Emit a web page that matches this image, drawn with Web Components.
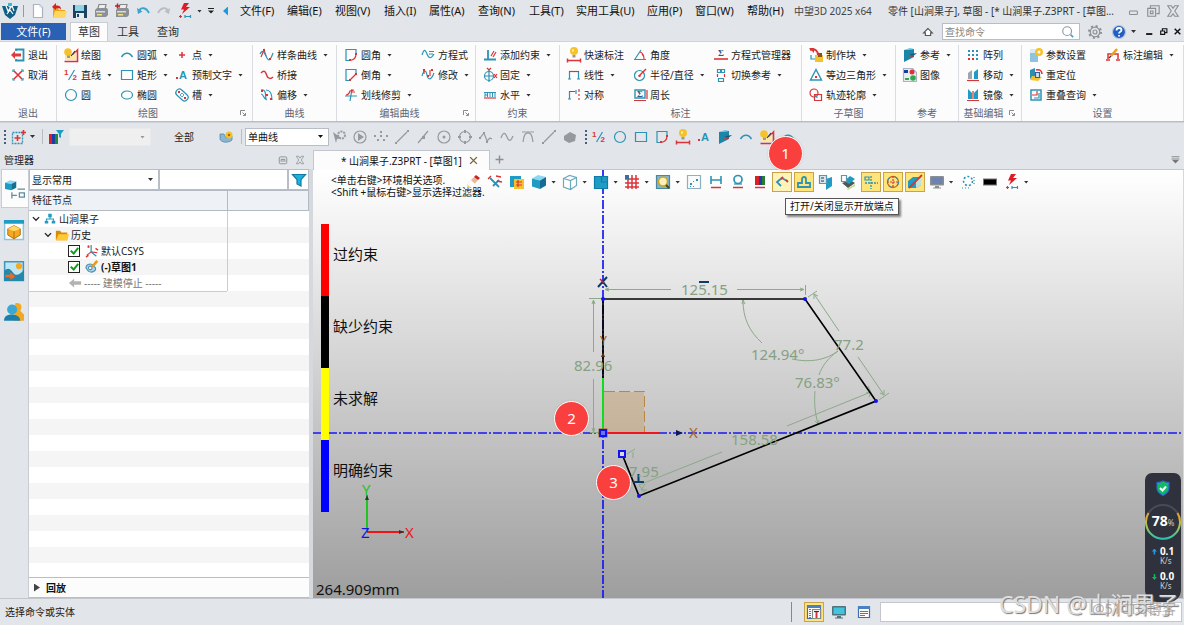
<!DOCTYPE html>
<html lang="zh-CN">
<head>
<meta charset="utf-8">
<title>中望3D 2025 x64</title>
<style>
  html, body { margin: 0; height: 100%; }
  body {
    font-family: "Noto Sans", "Noto Sans CJK SC", sans-serif;
    font-size: 11px; line-height: 16px; color: #222;
    background: #e2e5e9;
    --bar: #e2e5e9; --line: #b9bec6; --small: 10px; --text: 11px; --large: 15px;
  }
</style>
</head>
<body>
<cad-app></cad-app>

<script>
const define = (name, html, setup) => customElements.define(name, class extends HTMLElement {
  connectedCallback() {
    if (this.shadowRoot) return;
    const t = document.createElement('template');
    t.innerHTML = typeof html === 'function' ? html(this) : html;
    this.attachShadow({ mode: 'open' }).append(t.content.cloneNode(true));
    if (setup) setup(this);
  }
});

/* ---------- icons, drawn on a 16 x 16 grid ---------- */
const bulb = '<circle class="Y" cx="8" cy="5" r="4"/><path fill="#fff3a0" d="M6 3.500h2v2H6z"/><path class="G" d="M6.500 9h3v2.500h-3z"/>';
const drawIcon = '<path class="r" stroke-width="1.600" d="M1.500 14.500h13V3L7 11"/><path fill="#ffe9a0" d="M2 8h8l3-3v8H2z"/><circle class="Y" cx="5" cy="5" r="3.800"/><path class="G" d="M4 8.500h3V11H4z"/><path class="n" d="M8 9l4-5"/>';
const bolt = '<path fill="#e01b24" d="M7 0h5L9 4h4L5 11l2-4.500H4z"/><path class="r" d="M2 13.500h3M3.500 12v3"/><path class="b" d="M8 13.500h5M8 12v3M13.500 12v3"/>';
const cubeBlue = '<path fill="#8ad8f2" d="M1 4.500l6-3.500 8 2-6 3.500z"/><path class="B" d="M1 4.500l8 2V15l-8-2.500z"/><path fill="#156c95" d="M9 6.500L15 3v8.500L9 15z"/>';
const printer = '<path fill="#eee" stroke="#888" d="M5 5l1-3.500h7L12 6"/><path fill="#8b9096" d="M2 7l2-2h10l1 2v5l-2 2H2z"/><path fill="#d9dcdf" d="M3 8h9v1.500H3z"/><path fill="#f0e27a" d="M4 11h5v1.500H4z"/>';
const refIcon = '<path fill="#1b86a8" d="M2 3l10-1v8L2 15z"/><path fill="#67c6df" d="M2 3l6-2 4 1z"/><path fill="#145c86" d="M8 7l7-1-5 4z"/><path class="r" d="M7 9h5"/>';
const monitor = (a, b) => `<rect x="1" y="2" width="14" height="9.500" rx="1" fill="${b}"/><rect x="2.500" y="3.500" width="11" height="6.500" fill="${a}"/><path fill="${b}" d="M6 12h4v1.500h2v1H4v-1h2z"/>`;
const ICONS = {
  logo: '<path fill="#0f5f86" d="M0 3h6l2 2 2-2h6l-3 9-5 4-5-4z"/><path fill="none" stroke="#fff" stroke-width="1.200" d="M4 3l2 5 4-5 2 5M5 11l3-4 3 4"/><path fill="#38b6e0" d="M6 0h4v3H6z"/>',
  file: '<path fill="#fff" stroke="#aab4c0" d="M3.500 1.500h6l3 3v10h-9z"/><path fill="#d5deea" d="M9.500 1.500v3h3z"/>',
  open: '<path fill="#e9a416" d="M2 5h5l1 2h6v8H2z"/><path fill="#ffd75e" d="M4 8h12l-2 7H2z"/><path fill="#d92026" d="M1 4l4-4v2.500c4 0 5 1 5 4C9 5 7.500 5 5 5.500V7z"/>',
  save: '<path fill="#1c4460" d="M1 2h14v13H1z"/><path fill="#8fd3e8" d="M3 2h9v6H3z"/><path fill="#e6eef3" d="M4 10h8v5H4z"/><path fill="#1c4460" d="M5 11h2v3H5z"/>',
  print: printer,
  printadd: printer + '<path stroke="#c21e2a" stroke-width="1.500" d="M1 3h5M3.500.5v5"/>',
  undo: '<path fill="none" stroke="#3ba3cf" stroke-width="1.800" d="M4 8c2-4 7-4 10 2"/><path fill="#3ba3cf" d="M2 5l1 6 4.500-2.500z"/>',
  redo: '<path fill="none" stroke="#b9bdc2" stroke-width="1.800" d="M12 8c-2-4-7-4-10 2"/><path fill="#b9bdc2" d="M14 5l-1 6-4.500-2.500z"/>',
  bolt,
  exit: '<path class="b" stroke-width="1.800" d="M6 4V2.500h7.500v11H6V12"/><path fill="#e03a3e" d="M1 8l4-4v2.500h6v3H5V12z"/>',
  cancel: '<path class="r" stroke-width="1.600" d="M4 4l8 8M12 4l-8 8"/><path class="b" d="M3 5V3h2M11 3h2v2M13 11v2h-2M5 13H3v-2"/>',
  draw: drawIcon,
  line: '<path class="b" d="M5.500 13l6-10"/><text x="1" y="8" class="tr">1</text><text x="9.500" y="12.500" class="tr">2</text>',
  circle: '<circle class="b" cx="8" cy="8" r="5.500"/>',
  arc: '<path class="b" stroke-width="1.500" d="M2.500 10c3-5 8-5 11 0"/>',
  rect: '<path class="b" d="M2.500 3.500h11v9h-11z"/>',
  ellipse: '<ellipse class="b" cx="8" cy="8" rx="5.500" ry="4"/>',
  point: '<path class="r" stroke-width="1.500" d="M8 5v6M5 8h6"/>',
  pretext: '<text x="5" y="12" class="tb">A</text><path class="R" d="M2 10h2v2H2z"/>',
  slot: '<rect class="b" x="1" y="4.500" width="14" height="7" rx="3.500" transform="rotate(42 8 8)"/><path class="R" d="M4 4h2v2H4zM10 10h2v2h-2z"/><path class="b" stroke-width=".8" d="M6 8l2-2 2 2-2 2z"/>',
  spline: '<path class="r" d="M2 10L5 3l2 6"/><path class="b" d="M1 7c3-6 5 0 7 4s4 1 6-5"/><path class="R" d="M4 2h2v2H4zM10 11h2v2h-2z"/>',
  bridge: '<path class="r" stroke-width="1.500" d="M2 6c4-4 5 0 6 3s4 3 6 1"/>',
  offset: '<path class="b" d="M2 3c6-1 4 6 5 9M7 3c5 0 6 4 6 10M2 7c3 0 2 5 6 6"/><path class="R" d="M2 3h2v2H2zM7 7h2v2H7zM11 11h2v2h-2z"/>',
  fillet: '<path class="b" d="M13 8V2.500H3v11h5"/><path class="r" d="M13 7c0 4-2 6-6 6.500"/><path class="R" d="M12 6h2v2h-2zM6 12h2v2H6z"/>',
  chamfer: '<path class="b" d="M13 7V2.500H3v11h5"/><path class="r" d="M13 7l-6 6"/><path class="R" d="M12 6h2v2h-2zM6 12h2v2H6z"/>',
  trim: '<path class="b" d="M2 9h12M7 14l2-12"/><path class="r" d="M3 8c2 0 3-1 4-4l4-1M8 5h4"/>',
  equation: '<path class="b" d="M2 8c2-6 3-6 5-1s4 5 7 0M9 4.500h5M9 7h4"/>',
  modify: '<path class="b" d="M2 9c2-7 4-6 5-1s4 6 7-2"/><path class="r" d="M4 2v5M10 9V3"/><path class="R" d="M3 2h2v2H3zM11 2h2v2h-2zM7 8h2v2H7z"/>',
  addcon: '<path class="b" stroke-width="1.800" d="M2 12.500h12M6 3v9"/><path class="r" d="M9 9l3-5M11 10l3-5"/>',
  fix: '<circle class="b" cx="7" cy="9" r="4.500"/><path class="b" d="M7 3v12M2 9h10"/><path class="r" d="M5 1l2 2 2-2M12 7l3 4M15 7l-3 4"/>',
  horz: '<path class="b" stroke-width="1" d="M2 5.500h12M3 6v4M5.500 6v4M3 8h2.500M8 6v4M10.500 6v4M13 6v4"/><path class="r" d="M2 11h12"/>',
  quickdim: '<g transform="translate(0 -1)">' + bulb + '</g><path class="r" stroke-width="1.500" d="M1 13.500h14M1.500 11.500v4M14.500 11.500v4"/>',
  linear: '<path class="b" d="M3.500 4v8M12.500 4v8M2 12h3M11 12h3"/><path class="r" d="M3 4.500h10"/>',
  symm: '<path class="b" d="M3.500 4v8M2 12h3"/><path class="r" d="M3 4.500h6M13 2v3M13 7v2M13 11v2"/><path class="b" d="M10 3v4"/>',
  angle: '<path class="b" d="M2 12.500h12M3 12L9 3"/><path class="r" d="M8 5c3 1 4 4 4 7M10 7l2 3"/>',
  radius: '<circle class="b" cx="7.500" cy="8.500" r="5"/><path class="r" stroke-width="1.500" d="M7 9l7-7"/><path class="R" d="M6.500 8h2v2h-2z"/>',
  perim: '<path class="b" stroke-width="1.400" d="M3 3h10v8H3z"/><text x="5" y="10" class="ts">Σ</text><path class="r" d="M2 13.500h12M15 3v9"/>',
  eqman: '<text x="5" y="9" class="ts">Σ</text><path class="r" stroke-width="1.600" d="M1 12h14"/>',
  swapref: '<path class="b" d="M4.500 2.500h3v3h-3zM8.500 2.500h3v3h-3zM5.500 11.500h5v3h-5z"/><path class="r" d="M4.500 7v3M11.500 7v3"/>',
  block: '<path class="Y" d="M7 8h8v7H7z"/><path fill="#7a5b12" d="M10 6h4v4h-4z"/><path class="r" stroke-width="2" d="M2 3c5-2 8 1 8 5"/><path class="R" d="M1 1h5v5z"/><path class="b" d="M3 8v4h4"/>',
  triangle: '<path class="b" stroke-width="1.400" d="M8 2.500l5.500 10.500h-11z"/><path class="R" d="M7 9h2v2H7z"/>',
  profile: '<circle class="r" cx="6" cy="6" r="4"/><path class="r" d="M6.500 7.500h7v6h-7z"/><path class="b" d="M6 9c2-1 3 0 3 2"/>',
  ref: refIcon,
  image: '<path fill="#e8edf2" stroke="#a9b4c0" d="M1.500 1.500h9l4 4v9h-13z"/><path fill="#123d9c" d="M2 3h4v3H2z"/><circle class="R" cx="10" cy="5" r="2.500"/><path fill="#31a84d" d="M3 11h4v2H3z"/><circle fill="#31a84d" cx="11" cy="11" r="2.800"/>',
  pattern: '<path fill="#2b93b5" d="M3 3h2v2H3zM7 3h2v2H7zM11 3h2v2h-2zM3 7h2v2H3zM7 7h2v2H7zM11 7h2v2h-2zM11 11h2v2h-2z"/><path class="R" d="M3 11h2v2H3zM7 11h2v2H7z"/>',
  move: '<path fill="#9ea5ad" d="M3 6l4-3v9H3z"/><path class="B" d="M9 5l4-3v10H9z"/><path class="r" d="M2 13.500h12"/>',
  mirror: '<path class="B" d="M3 2l4 4v6H3zM13 2L9 6v6h4z"/><path class="r" d="M2 13.500h12M8 4v8"/>',
  params: '<path fill="#8fc3de" d="M2 4h8v11H2z"/><path fill="#d9e8f2" d="M2 2h5v4H2z"/><circle class="Y" cx="11" cy="5" r="4"/><circle fill="#fff" cx="11" cy="5" r="1.500"/>',
  reloc: '<path fill="#2d8db3" d="M2 3l5-2v8l-5 3z"/><path class="Y" d="M4 9l10 1-4 4-8-1z"/><path class="r" stroke-width="1.500" d="M8 3c4-1 6 1 6 4"/><path fill="#cfe0f2" stroke="#355c9d" d="M7.500 5.500h4v5h-4z"/>',
  overlap: '<path class="b" stroke-width="1.500" d="M13 3H3v10h10z"/><path class="r" d="M4 8h5V4"/><path class="b" d="M6 11h5V6"/>',
  dimedit: '<path class="r" stroke-width="1.500" d="M3 12V7h10v5M1 13h4M11 13h4"/><path stroke="#e8a11b" stroke-width="2.500" d="M6 9l6-7"/><path class="n" d="M4 11l2-2"/>',
  pick: '<path fill="none" stroke="#2b93b5" stroke-width="1.300" stroke-dasharray="2 1" d="M2.500 3.500h10v11h-10z"/><path class="r" stroke-width="1.600" d="M7.500 6v6M4.500 9h6M13.500 1v5M11 3.500h5"/>',
  colorfilter: '<path fill="#d92027" d="M1 5h3v10H1z"/><path fill="#1d3da8" d="M4 5h3v10H4z"/><path fill="#1f8b3a" d="M7 5h3v10H7z"/><path class="B" d="M8 1h8l-3 4v4l-2-1V5z"/>',
  sphere: '<path fill="#8fb4cf" stroke="#4a8bb4" stroke-width=".8" d="M2 5h4l2 4 6-2v4c-3 3-11 3-12-1z"/><circle class="Y" cx="11" cy="6" r="3.500"/><circle fill="#a86c0c" cx="11" cy="6" r="1.300"/>',
  gcursor: '<path class="G" d="M2 3l8 6-4 1-1 4z"/><circle class="g" cx="10.500" cy="6" r="3.500" stroke-dasharray="2 1" stroke-width="2"/>',
  gplay: '<circle class="g" cx="8" cy="8" r="6"/><path class="G" d="M6 4l6 4-6 4z"/>',
  gpoints: '<path class="G" d="M1 6h2v2H1zM4 10h2v2H4zM7 6h2v2H7zM10 10h2v2h-2zM13 6h2v2h-2zM7 2h2v2H7z"/>',
  gline: '<path class="g" d="M3 13L13 3"/><path class="G" d="M1 13h2v2H1zM13 1h2v2h-2z"/>',
  gmid: '<path class="g" d="M3 14L13 2"/><path class="G" d="M7 7h3v3H7z"/>',
  gcenter: '<circle class="g" cx="8" cy="8" r="6"/><circle class="G" cx="8" cy="8" r="1.500"/>',
  gquad: '<circle class="g" cx="8" cy="8" r="5.500"/><path class="G" d="M7 1h2v3H7zM7 12h2v3H7zM1 7h3v2H1zM12 7h3v2h-3z"/>',
  gzig: '<path class="g" d="M2 9l4-5 3 8 3-3 2 1"/><path class="G" d="M1 8h2v2H1zM5 3h2v2H5zM8 12h2v2H8z"/>',
  gwave: '<path class="g" d="M2 9c2-6 4-6 6-1s4 4 6-1"/>',
  gtan: '<path class="g" d="M2 3h12M3 13c1-7 2-9 5-9s4 2 5 9"/>',
  gplane: '<path class="G" d="M2 7l6-4 6 3-1 6-6 2-5-3z"/>',
  dimh: '<path class="b" stroke-width="1.600" d="M3 2v8M13 2v8M3 6h10"/><path class="r" stroke-width="1.500" d="M3 13.500h10"/>',
  dimo: '<circle class="b" stroke-width="1.700" cx="8" cy="5.500" r="4"/><path class="b" d="M4 10h8"/><path class="r" stroke-width="1.500" d="M3 13.500h10"/>',
  rgb: '<path fill="#d92027" d="M3 2h4v9H3z"/><path fill="#1d3da8" d="M7 2h3v9H7z"/><path fill="#2a7a34" d="M10 2h3v9h-3z"/><path class="r" stroke-width="1.500" d="M3 13.500h10"/>',
  openend: '<path class="b" stroke-width="1.800" d="M8 4L3 8l4 4M8 4l5 3"/><path class="r" stroke-width="1.800" d="M7 5l2-2M12 6l2 2"/>',
  region: '<path class="b" stroke-width="1.800" d="M2 13V9h4V5a2 2 0 0 1 4 0v4h4v4z"/>',
  eraser: '<path fill="#e9b89b" d="M3 9l6-6 4 3-6 7z"/><path fill="#fff" d="M3 9l3-3 4 4-3 4z"/><path fill="#c8231e" d="M9 3l2-2 4 3-2 2z"/><path fill="#f0cd4c" d="M2 10l4 4H3z"/>',
  conn: '<path class="b" stroke-width="1.800" d="M3 4l9 9M6 12l6-6"/><path class="r" stroke-width="1.300" d="M1 5l3-3M9 2l5 1M10 7l5 1"/>',
  layer: '<path class="B" d="M1 2h11v11H1z"/><path class="Y" d="M5 5h10v10H5z"/><path class="r" d="M7 8h6M7 11h6M9 6v7"/>',
  cube: cubeBlue,
  wire: '<path fill="#fff" stroke="#6fa9bd" d="M1.500 4.500l6-3 7 2v8l-6 4-7-2.500zM1.500 4.500l7 2 6-3M8.500 6.500v9"/>',
  plane: '<path class="B" d="M1 2h14v13H1z"/><path fill="none" stroke="#0c7ea6" d="M1.500 2.500h13v12h-13zM8.500 2v6H15"/>',
  grid: '<path fill="#fff" d="M1 1h14v14H1z"/><path class="r" stroke-width="1.500" d="M1 5h14M1 9h14M1 13h14M4 1v14M8 1v14M12 1v14"/><path fill="#3c6ea0" d="M1 1h4v4H1z"/>',
  zoom: '<path fill="#7fb6cf" stroke="#4a86a1" d="M1.500 1.500h13v13h-13z"/><circle fill="#fff1b8" stroke="#d6a21c" stroke-width="1.600" cx="8" cy="7.500" r="4.500"/><path stroke="#51480e" stroke-width="2" d="M11 11l3 3"/>',
  dotbox: '<path fill="#f9fbfc" stroke="#8fb1bf" d="M1.500 1.500h13v13h-13z"/><path fill="#2b93b5" d="M4 9h2v2H4zM4 12h1v1H4zM7 12h1v1H7zM10 5h2v2h-2zM7 7h1v1H7z"/>',
  sect: '<path class="B" d="M8 5l6-2v9l-6 4z"/><path fill="#d9e8ef" stroke="#5b95b0" d="M1.500 1.500h7v8h-7z"/><path class="n" stroke-width="1" d="M3 4h3M3 7h3"/>',
  sheet: '<path fill="#555" d="M2 9l8-3 5 3-7 5z"/><path class="B" d="M4 7l6-5 5 3-6 5z"/><path fill="#b9df8c" d="M2 12l5 3 8-5v2l-7 4z"/><path fill="#fff" stroke="#5b95b0" d="M1.500 1.500h5v6h-5z"/>',
  axes: '<path fill="none" stroke="#2b93b5" stroke-width="1.300" stroke-dasharray="2 1" d="M2 9h13M8 2v13"/><path class="b" d="M2 3h4v3H2z"/>',
  target: '<circle fill="none" stroke="#c56a1a" stroke-width="1.300" cx="8" cy="8" r="5.500"/><path class="r" stroke-dasharray="2 1" d="M8 2v12M2 8h12"/><circle class="b" cx="8" cy="8" r="5.500" stroke-dasharray="4 5"/>',
  knife: '<path class="B" d="M1 7l5-4h8v8l-5 3H1z"/><path fill="#bfe3d8" d="M9 7l5-4v8l-5 3z"/><path class="r" stroke-width="1.800" d="M2 14L15 1"/>',
  monitor: monitor('#6b83b0', '#8a8d92'),
  dots: '<circle fill="none" stroke="#2b93b5" stroke-width="1.600" stroke-dasharray="2 2" cx="8" cy="7" r="4.500"/><path fill="none" stroke="#2b93b5" stroke-dasharray="1 2" d="M2 14h7M14 3v8"/>',
  black: '<path fill="#777" d="M1 4.500h14v7H1z"/><path d="M2 5.500h12v5H2z"/>',
  screen: monitor('#41c4de', '#4f7280'),
  list: '<path fill="#fff" stroke="#3f6fb0" d="M2.500 2.500h11v11h-11z"/><path fill="#4a80c4" d="M2 2h12v3H2z"/><path stroke="#5077b0" stroke-width="1" d="M4 7.500h8M4 9.500h8M4 11.500h5"/>',
  tpanel: '<path fill="#fff" stroke="#3f6fb0" d="M1.500 1.500h13v13h-13z"/><path fill="#4a80c4" d="M1 1h14v3H1z"/><path stroke="#4a80c4" stroke-dasharray="1 1" stroke-width="2" d="M4 5v9"/><path fill="#fff" stroke="#888" d="M6.500 5.500h8v9h-8z"/><path class="r" stroke-width="2" d="M10.500 8v6"/><path class="n" d="M8 7.500h5"/>',
  tree: '<path class="B" d="M6 2h4v4H6zM2 10h4v3H2zM10 10h4v3h-4z"/><path class="b" d="M8 5v3M4 10V8h8v2"/>',
  folder: '<path fill="#d98a0c" d="M1 3h5l1 2h7v9H1z"/><path fill="#ffc933" d="M4 7h12l-2 7H1z"/>',
  csys: '<path class="r" stroke-width="1.400" d="M7 9l7 1M7 9l-5 4M3 2l2 2M5 2L3 4M12 5l3 2M1 15l3-2"/><path class="b" stroke-width="1.400" d="M7 1v8l6 5"/>',
  sketch: '<path fill="#a9d3ea" stroke="#4b8fb2" d="M1 9c0-4 4-5 7-4l4 4c1 4-4 6-8 4z"/><circle fill="#fff" stroke="#4b8fb2" cx="6" cy="9" r="2"/><path stroke="#ea9a17" stroke-width="3" d="M8 8l6-7"/>',
  back: '<path fill="#b3b3b3" d="M1 8l6-5v3h8v4H7v3z"/>',
  funnel: '<path fill="#1fb0dc" stroke="#0c7ea6" d="M1.500 2.500h13L10 7.500V14l-4-2V7.500z"/>',
  chevron: '<path fill="none" stroke="#222" stroke-width="2" d="M3 5l5 5 5-5"/>',
  gear: '<circle fill="none" stroke="#8c9096" stroke-width="1.200" cx="8" cy="8" r="4.800"/><circle fill="none" stroke="#8c9096" stroke-width="2" stroke-dasharray="2 2.700" cx="8" cy="8" r="6"/><circle fill="#e2e5e9" stroke="#8c9096" cx="8" cy="8" r="2"/>',
  help: '<circle fill="#1f5fc4" stroke="#b9c7dd" cx="8" cy="8" r="6.500"/><path fill="none" stroke="#fff" stroke-width="1.800" d="M5.500 6.500c0-3.500 5-3 5-.5 0 2-2.500 1.500-2.500 3.500M8 11v1.500"/>',
  search: '<circle fill="none" stroke="#8d98a3" stroke-width="1.300" cx="7" cy="7" r="5"/><path stroke="#4aa3c4" stroke-width="2" d="M11 11l3 3"/>',
  min: '<path d="M2 11h11v3H2z"/>',
  restore: '<path fill="none" stroke="#111" stroke-width="2" d="M6 6V3h8v7h-3M3 7h7v6H3z"/>',
  close: '<path stroke="#111" stroke-width="2.500" d="M3 3l10 10M13 3L3 13"/>',
  wmin: '<rect fill="none" stroke="#8a8d92" x="4" y="8" width="9" height="4" rx="1"/>',
  wrestore: '<path fill="none" stroke="#8a8d92" stroke-width="1.300" d="M5 5V2h10v9h-3M2 5h9v9H2zM5 8h3v3H5z"/>',
  wclose: '<path fill="none" stroke="#8a8d92" stroke-width="1.200" d="M2 2h4l2 3 2-3h4l-4 6 4 6h-4l-2-3-2 3H2l4-6z"/>',
  pin: '<rect fill="none" stroke="#7f848a" stroke-width="1.300" x="2" y="3" width="12" height="11" rx="2"/><path fill="none" stroke="#7f848a" stroke-width="1.300" d="M5 11V7h6v4M8 7v4"/>',
  home: '<path fill="#fff" stroke="#555" stroke-width="1.300" d="M8 4L3 9h2v3h6V9h2z"/>',
  plus: '<path stroke="#8a8d92" stroke-width="2.500" d="M8 1v14M1 8h14"/>',
  x: '<path stroke="#7c6432" stroke-width="2.500" d="M2 2l12 12M14 2L2 14"/>',
  launch: '<path fill="none" stroke="#666" stroke-width="1.500" d="M3 12V3h9M7 7l5 5M13 8v5H8"/>',
  more: '<path fill="none" stroke="#888" stroke-width="1.800" d="M1 3h14M1 7h14"/><path fill="#777" d="M2 9h12l-6 6z"/>',
  down: '<path stroke="#222" stroke-width="2" d="M2 3h12"/><path fill="#222" d="M2 7h12l-6 6z"/>',
  manager: '<path fill="#8ad8f2" d="M0 3l4-2 5 1-4 2z"/><path class="B" d="M0 3l5 1v5L0 8z"/><path fill="#156c95" d="M5 4l4-2v5L5 9z"/><path fill="none" stroke="#5e8ba0" stroke-width="1" d="M5.500 10.500v5M5.500 13h4M11.500 11h4v3.500h-4zM10 8h6"/>',
  part: '<path fill="#fff" stroke="#8ec6de" d="M.5.5h15v15H.5z"/><path class="B" d="M0 0h16v3H0z"/><path fill="#f6a821" stroke="#a86708" stroke-width=".7" d="M3 7l5-2.500L13 7v5l-5 3-5-3z"/><path fill="#ffd86b" d="M3 7l5-2.500L13 7 8 9z"/><path stroke="#a86708" stroke-width=".7" d="M8 9v6"/>',
  scene: '<path fill="#bfe6f4" stroke="#3d97bb" d="M.5.5h15v15H.5z"/><path fill="#2487ac" d="M0 16V8c3-3 5-2 7 1s5 3 9-2v9z"/><circle fill="#f7a81c" cx="12" cy="4" r="2.500"/><path fill="#ee6b22" d="M1 11h4V9l4 3.500L5 15v-2H1z"/>',
  users: '<path fill="#f3a81e" d="M9 1c5-1 6 3 4 6l3 3v5H8z"/><circle fill="#3aa8d4" cx="6.500" cy="6" r="4"/><path fill="#1b7fab" d="M0 15c0-4 3-5 6.500-5S13 12 13 15z"/>',
  shield: '<path fill="#12b866" stroke="#2f63d6" d="M8 1c2 1 4 1.500 6 1.500V8c0 4-3 6-6 7.500C5 14 2 12 2 8V2.500C4 2.500 6 2 8 1z"/><path fill="none" stroke="#fff" stroke-width="2" d="M5 8l2.500 2.500L11 6.500"/>',
};
define('ui-icon', el => `
<style>
  :host { display: block; flex: none; width: var(--size, 16px); height: var(--size, 16px); }
  svg { display: block; width: 100%; height: 100%; overflow: visible; }
  .b { fill: none; stroke: #2b93b5; } .r { fill: none; stroke: #dc3338; }
  .g { fill: none; stroke: #96999d; } .n { fill: none; stroke: #333; }
  .B { fill: #1f9cc4; } .R { fill: #dc3338; } .G { fill: #96999d; } .Y { fill: #f6c22b; }
  .tr { font: bold 8px "Liberation Sans", sans-serif; fill: #dc3338; }
  .tb { font: bold 11px "Liberation Sans", sans-serif; fill: #2b93b5; }
  .ts { font: bold 9px "Liberation Serif", serif; fill: #2a5a88; }
</style>
<svg viewBox="0 0 16 16" stroke-width="1.2" aria-hidden="true">${ICONS[el.getAttribute('name')] || ''}</svg>`);

define('drop-arrow', `
<style>
  :host { display: block; flex: none; width: 5px; height: 3px; background: var(--arrow, #333);
          clip-path: polygon(0 0, 100% 0, 50% 100%); }
</style>`);

/* ---------- small shared controls ---------- */
define('tool-button', el => `
<style>
  :host { display: block; flex: none; }
  button { display: flex; align-items: center; justify-content: center; gap: 4px; box-sizing: border-box;
           width: var(--w, 16px); height: 20px; padding: 0; border: 0; background: none; font: inherit; color: inherit; }
  :host([drop]) button { width: auto; }
  :host([active]) button { background: #ffe47a; border: 1px solid #c9a24a; }
  :host([hover]) button { background: #fff3b8; }
</style>
<button type="button" aria-label="${el.getAttribute('label') || el.getAttribute('icon')}"><ui-icon name="${el.getAttribute('icon')}"></ui-icon>${el.hasAttribute('drop') ? '<drop-arrow></drop-arrow>' : ''}</button>`);

define('ribbon-button', el => `
<style>
  :host { display: flex; }
  button { display: flex; align-items: center; height: 20px; padding: 0; border: 0; background: none;
           font: inherit; line-height: 16px; color: #222; white-space: nowrap; }
  ui-icon { margin-right: 2px; }
  drop-arrow { margin-left: 6px; }
</style>
<button type="button"><ui-icon name="${el.getAttribute('icon')}"></ui-icon><slot></slot>${el.hasAttribute('drop') ? '<drop-arrow></drop-arrow>' : ''}</button>`);

define('ribbon-group', el => `
<style>
  :host { display: flex; flex-direction: column; flex: none; box-sizing: border-box; width: var(--w); padding-top: 3px; }
  .items { display: grid; grid-template-rows: repeat(3, 20px); grid-auto-flow: column; justify-content: start;
           grid-template-columns: var(--cols, auto); padding-left: var(--pad, 6px); height: 60px;
           border-right: 1px solid #d9dce1; }
  footer { display: grid; grid-template-columns: 1fr auto; align-items: center; height: 17px; text-align: center;
           color: #5c6675; border-right: 1px solid #d9dce1; }
  span { white-space: nowrap; }
  ui-icon { --size: 8px; margin-right: 5px; }
</style>
<div class="items"><slot></slot></div>
<footer><span>${el.getAttribute('label')}</span>${el.hasAttribute('launch') ? '<ui-icon name="launch"></ui-icon>' : ''}</footer>`);

define('combo-box', el => `
<style>
  :host { display: grid; align-items: center; min-width: 0; }
  select, drop-arrow { grid-area: 1 / 1; }
  select { appearance: none; box-sizing: border-box; width: 100%; height: 100%; margin: 0; padding: 0 2px; border-radius: 0;
           border: 1px solid #b9bec6; background: #fff; font: inherit; color: #111; opacity: 1; }
  select:disabled { background: #efefef; border-color: #e9eaec; }
  drop-arrow { justify-self: end; margin-right: 6px; pointer-events: none; }
</style>
<select aria-label="${el.getAttribute('label')}" ${el.hasAttribute('disabled') ? 'disabled' : ''}><option>${el.getAttribute('value') || ''}</option></select>
<drop-arrow></drop-arrow>`);

/* ---------- title bar ---------- */
define('title-bar', `
<style>
  :host { display: flex; align-items: center; height: 22px; white-space: nowrap; }
  .quick { display: flex; align-items: center; gap: 5px; box-sizing: border-box; width: 240px; padding-left: 2px; flex: none; }
  .sep { width: 1px; height: 12px; margin-right: 1px; background: #999; }
  .quick > ui-icon[name=down] { --size: 8px; }
  .left { width: 5px; height: 9px; margin-left: 3px; background: #1d9ad8; clip-path: polygon(100% 0, 100% 100%, 0 50%); }
  nav { display: grid; grid-template-columns: 47px 48px 49px 45px 49px 51px 47px 71px 48px 52px 47px; flex: none; }
  a { color: #111; text-decoration: none; }
  .product { width: 94px; flex: none; color: #444; font-size: var(--small); }
  .doc { flex: 1; min-width: 0; overflow: hidden; font-size: var(--small); color: #333; }
  .win { display: flex; gap: 6px; padding-right: 4px; --size: 14px; --w: 14px; }
</style>
<div class="quick">
  <ui-icon name="logo"></ui-icon><span class="sep"></span>
  <tool-button icon="file" label="新建"></tool-button><tool-button icon="open" label="打开"></tool-button>
  <tool-button icon="save" label="保存"></tool-button><tool-button icon="print" label="打印"></tool-button>
  <tool-button icon="printadd" label="打印设置"></tool-button><tool-button icon="undo" label="撤销"></tool-button>
  <tool-button icon="redo" label="重做"></tool-button><tool-button icon="bolt" label="重生成" drop></tool-button>
  <ui-icon name="down"></ui-icon><span class="left"></span>
</div>
<nav>
  <a href="#">文件(F)</a><a href="#">编辑(E)</a><a href="#">视图(V)</a><a href="#">插入(I)</a><a href="#">属性(A)</a>
  <a href="#">查询(N)</a><a href="#">工具(T)</a><a href="#">实用工具(U)</a><a href="#">应用(P)</a><a href="#">窗口(W)</a><a href="#">帮助(H)</a>
</nav>
<span class="product">中望3D 2025 x64</span>
<span class="doc">零件 [山涧果子], 草图 - [* 山涧果子.Z3PRT - [草图...</span>
<div class="win"><tool-button icon="wmin" label="最小化"></tool-button><tool-button icon="wrestore" label="还原"></tool-button><tool-button icon="wclose" label="关闭"></tool-button></div>`);

/* ---------- ribbon tabs ---------- */
define('ribbon-tabs', `
<style>
  :host { display: flex; align-items: stretch; height: 19px; padding: 0 2px 0 1px; color: #333; }
  button { font: inherit; border: 0; padding: 0; background: none; color: inherit; }
  .file { width: 65px; margin: 1px 4px 1px 0; background: #2a61b5; color: #fff; }
  .on { width: 38px; background: #fcfcfc; border: 1px solid #c9cdd3; border-bottom: 0; box-sizing: border-box; }
  .tab { width: 40px; }
  .end { display: flex; align-items: center; margin-left: auto; }
  .end tool-button { --w: 16px; }
  label { display: flex; align-items: center; box-sizing: border-box; width: 138px; height: 17px; margin: 0 7px;
          border: 1px solid #b9bec6; background: #fff; padding-right: 4px; --size: 14px; }
  input { flex: 1; min-width: 0; border: 0; padding: 0 2px; font: inherit; font-size: var(--small); background: none; outline: 0; }
  input::placeholder { color: #888; }
  .gap { width: 8px; }
  .mdi { display: flex; gap: 5px; margin-left: 9px; --size: 9px; }
  drop-arrow { margin-left: 4px; }
</style>
<button class="file" type="button">文件(F)</button>
<button class="on" type="button">草图</button>
<button class="tab" type="button">工具</button>
<button class="tab" type="button">查询</button>
<div class="end">
  <ui-icon name="home" style="--size:14px"></ui-icon>
  <label><input type="search" placeholder="查找命令" aria-label="查找命令"><ui-icon name="search"></ui-icon></label>
  <tool-button icon="gear" label="设置"></tool-button><span class="gap"></span><tool-button icon="help" label="帮助"></tool-button><drop-arrow></drop-arrow>
  <div class="mdi"><ui-icon name="min"></ui-icon><ui-icon name="restore"></ui-icon><ui-icon name="close"></ui-icon></div>
</div>`);

/* ---------- ribbon ---------- */
define('ribbon-bar', `
<style>
  :host { display: flex; box-sizing: border-box; height: 81px; background: #fcfcfc; border-top: 1px solid #cfd3d9;
          border-bottom: 1px solid #b9bec6; font-size: var(--small); overflow: hidden; }
  .last { flex: 1 0 auto; }
</style>
<ribbon-group label="退出" style="--w:57px;--pad:10px">
  <ribbon-button icon="exit">退出</ribbon-button><ribbon-button icon="cancel">取消</ribbon-button>
</ribbon-group>
<ribbon-group label="绘图" launch style="--w:196px;--cols:56px 55px auto">
  <ribbon-button icon="draw">绘图</ribbon-button><ribbon-button icon="line" drop>直线</ribbon-button><ribbon-button icon="circle">圆</ribbon-button>
  <ribbon-button icon="arc" drop>圆弧</ribbon-button><ribbon-button icon="rect" drop>矩形</ribbon-button><ribbon-button icon="ellipse">椭圆</ribbon-button>
  <ribbon-button icon="point" drop>点</ribbon-button><ribbon-button icon="pretext" drop>预制文字</ribbon-button><ribbon-button icon="slot" drop>槽</ribbon-button>
</ribbon-group>
<ribbon-group label="曲线" style="--w:84px">
  <ribbon-button icon="spline" drop>样条曲线</ribbon-button><ribbon-button icon="bridge">桥接</ribbon-button><ribbon-button icon="offset" drop>偏移</ribbon-button>
</ribbon-group>
<ribbon-group label="编辑曲线" launch style="--w:139px;--cols:77px auto">
  <ribbon-button icon="fillet" drop>圆角</ribbon-button><ribbon-button icon="chamfer" drop>倒角</ribbon-button><ribbon-button icon="trim" drop>划线修剪</ribbon-button>
  <ribbon-button icon="equation">方程式</ribbon-button><ribbon-button icon="modify" drop>修改</ribbon-button>
</ribbon-group>
<ribbon-group label="约束" style="--w:84px">
  <ribbon-button icon="addcon" drop>添加约束</ribbon-button><ribbon-button icon="fix" drop>固定</ribbon-button><ribbon-button icon="horz" drop>水平</ribbon-button>
</ribbon-group>
<ribbon-group label="标注" style="--w:242px;--cols:66px 81px auto">
  <ribbon-button icon="quickdim">快速标注</ribbon-button><ribbon-button icon="linear" drop>线性</ribbon-button><ribbon-button icon="symm">对称</ribbon-button>
  <ribbon-button icon="angle">角度</ribbon-button><ribbon-button icon="radius" drop>半径/直径</ribbon-button><ribbon-button icon="perim">周长</ribbon-button>
  <ribbon-button icon="eqman">方程式管理器</ribbon-button><ribbon-button icon="swapref" drop>切换参考</ribbon-button>
</ribbon-group>
<ribbon-group label="子草图" style="--w:94px">
  <ribbon-button icon="block" drop>制作块</ribbon-button><ribbon-button icon="triangle" drop>等边三角形</ribbon-button><ribbon-button icon="profile" drop>轨迹轮廓</ribbon-button>
</ribbon-group>
<ribbon-group label="参考" style="--w:63px">
  <ribbon-button icon="ref" drop>参考</ribbon-button><ribbon-button icon="image">图像</ribbon-button>
</ribbon-group>
<ribbon-group label="基础编辑" launch style="--w:63px">
  <ribbon-button icon="pattern">阵列</ribbon-button><ribbon-button icon="move" drop>移动</ribbon-button><ribbon-button icon="mirror" drop>镜像</ribbon-button>
</ribbon-group>
<ribbon-group class="last" label="设置" style="--w:160px;--cols:77px auto">
  <ribbon-button icon="params">参数设置</ribbon-button><ribbon-button icon="reloc">重定位</ribbon-button><ribbon-button icon="overlap" drop>重叠查询</ribbon-button>
  <ribbon-button icon="dimedit" drop>标注编辑</ribbon-button>
</ribbon-group>`);

/* ---------- filter strip ---------- */
const buttons = names => names.map(n => `<tool-button icon="${n}"></tool-button>`).join('');
define('filter-strip', `
<style>
  :host { display: flex; align-items: center; box-sizing: border-box; height: 28px; padding: 0 4px; border-top: 1px solid #cfd3d9; font-size: var(--small); }
  .grip { width: 2px; height: 14px; flex: none; background: repeating-linear-gradient(#4a5a7a 0 2px, transparent 2px 4px); }
  .sep { width: 1px; height: 15px; flex: none; background: #b9bec6; }
  .off { width: 82px; height: 17px; --arrow: #999; }
  .kind { width: 84px; height: 18px; --arrow: #111; margin-left: 3px; }
  .row { display: flex; gap: 5px; }
  .all { margin: 0 24px 0 23px; white-space: nowrap; }
</style>
<span class="grip"></span>
<tool-button icon="pick" drop style="margin:0 7px 0 4px"></tool-button>
<span class="sep"></span>
<tool-button icon="colorfilter" style="margin:0 5px 0 5px"></tool-button>
<combo-box class="off" label="过滤器" disabled></combo-box>
<span class="all">全部</span>
<tool-button icon="sphere"></tool-button>
<span class="sep" style="margin-left:7px"></span>
<combo-box class="kind" label="曲线类型" value="单曲线"></combo-box>
<div class="row" style="margin:0 7px 0 2px">${buttons(['gcursor','gplay','gpoints','gline','gmid','gcenter','gquad','gzig','gwave','gtan','gline','gplane'])}</div>
<span class="grip"></span>
<div class="row" style="margin-left:4px">${buttons(['line','circle','rect','fillet','quickdim','pretext','ref','arc','draw','arc'])}</div>`);

/* ---------- manager panel ---------- */
define('tree-row', el => `
<style>
  :host { display: grid; grid-template-columns: 199px 1fr; height: 16px; }
  :host(:nth-child(even)) { background: #f5f5f5; }
  div { display: flex; align-items: center; gap: 2px; box-sizing: border-box; padding-left: var(--indent); border-right: 1px solid #c9cdd3; white-space: nowrap; --size: 14px; }
  input { appearance: none; flex: none; box-sizing: border-box; width: 12px; height: 12px; margin: 0 3px 0 0; border: 1px solid #222; background: #fff; }
  input:checked::before { content: ""; display: block; width: 3px; height: 6px; margin: 0 0 0 3px; border: solid #10a01c; border-width: 0 2px 2px 0; transform: rotate(40deg); }
</style>
<div>${el.hasAttribute('open') ? '<ui-icon name="chevron" style="--size:10px"></ui-icon>' : ''}
${el.hasAttribute('check') ? '<input type="checkbox" checked aria-label="显示">' : ''}
<ui-icon name="${el.getAttribute('icon')}"></ui-icon><slot></slot></div>`);

define('manager-panel', `
<style>
  :host { display: grid; grid-template: 19px 1fr / 29px 280px; padding-right: 4px; font-size: var(--small); background: #d5d9de; }
  header { grid-column: 1 / -1; display: flex; align-items: center; padding: 0 8px 0 4px; margin-right: -4px; background: var(--bar); --size: 10px; }
  header ui-icon { margin-left: 7px; }
  header span { flex: 1; }
  aside { display: flex; flex-direction: column; align-items: center; background: var(--bar); --size: 20px; border-right: 1px solid #c9cdd3; }
  aside ui-icon { margin-bottom: 21px; }
  aside .cur { display: grid; place-items: center; width: 27px; height: 39px; margin-bottom: 12px; background: #fcfcfc; border: 1px solid #c9cdd3; box-sizing: border-box; border-right: 0; }
  .cur ui-icon { margin: 0; }
  main { display: grid; grid-template-rows: 21px 21px 1fr 21px; background: #fff; min-height: 0; }
  .find { display: grid; grid-template-columns: 130px 1fr 21px; }
  .find input { min-width: 0; border: 1px solid #b9bec6; border-radius: 0; }
  .find button { display: grid; place-items: center; padding: 0; border: 1px solid #b9bec6; background: #fff; }
  .head { display: grid; grid-template-columns: 199px 1fr; background: #eef1f6; border: solid #b4bac3; border-width: 1px 0; box-sizing: border-box; }
  .head span { padding-left: 3px; border-right: 1px solid #b4bac3; line-height: 19px; box-sizing: border-box; }
  .tree { background: repeating-linear-gradient(#fff 0 16px, #f5f5f5 16px 32px); }
  .list { display: grid; background: #fff; }
  .end { width: 198px; height: 0; border-top: 1px solid #c9cdd3; }
  .replay { display: flex; align-items: center; gap: 6px; padding-left: 5px; border: solid #b9bec6; border-width: 1px 0; font: inherit; font-weight: bold; background: #fcfcfc; color: #111; text-align: left; }
  .replay i { width: 6px; height: 8px; background: #444; clip-path: polygon(0 0, 100% 50%, 0 100%); }
  b { color: #111; }
  .stop { color: #777; }
</style>
<header><span>管理器</span><ui-icon name="pin"></ui-icon><ui-icon name="wclose"></ui-icon></header>
<aside><div class="cur"><ui-icon name="manager"></ui-icon></div><ui-icon name="part"></ui-icon><ui-icon name="scene"></ui-icon><ui-icon name="users"></ui-icon></aside>
<main>
  <div class="find"><combo-box label="显示" value="显示常用"></combo-box><input type="text" aria-label="过滤"><button type="button" aria-label="筛选"><ui-icon name="funnel"></ui-icon></button></div>
  <div class="head"><span>特征节点</span><span></span></div>
  <div class="tree"><div class="list">
    <tree-row icon="tree" open style="--indent:2px">山涧果子</tree-row>
    <tree-row icon="folder" open style="--indent:14px">历史</tree-row>
    <tree-row icon="csys" check style="--indent:39px">默认CSYS</tree-row>
    <tree-row icon="sketch" check style="--indent:39px"><b>(-)草图1</b></tree-row>
    <tree-row icon="back" style="--indent:39px"><span class="stop">----- 建模停止 -----</span></tree-row>
  </div><div class="end"></div></div>
  <button class="replay" type="button"><i></i>回放</button>
</main>`);

/* ---------- sketch viewport ---------- */
define('view-toolbar', `
<style>
  :host { display: flex; align-items: flex-start; padding: 2px 0 0 18px; }
  p { margin: 2px 0 0; width: 132px; line-height: 12px; font-size: var(--small); white-space: nowrap; color: #111; }
  div { display: flex; justify-content: space-between; width: 568px; --w: 20px; }
  tool-button[drop] { padding: 0 2px; }
</style>
<p>&lt;单击右键&gt;环境相关选项.<br>&lt;Shift +鼠标右键&gt;显示选择过滤器.</p>
<div>
  <tool-button icon="eraser"></tool-button><tool-button icon="conn"></tool-button><tool-button icon="layer"></tool-button>
  <tool-button icon="cube" drop></tool-button><tool-button icon="wire" drop></tool-button><tool-button icon="plane" drop></tool-button>
  <tool-button icon="grid" drop></tool-button><tool-button icon="zoom" drop></tool-button>
  <tool-button icon="dotbox"></tool-button><tool-button icon="dimh"></tool-button><tool-button icon="dimo"></tool-button><tool-button icon="rgb"></tool-button>
  <tool-button icon="openend" active hover></tool-button><tool-button icon="region" active></tool-button>
  <tool-button icon="sect"></tool-button><tool-button icon="sheet"></tool-button>
  <tool-button icon="axes" active></tool-button><tool-button icon="target" active></tool-button><tool-button icon="knife" active></tool-button>
  <tool-button icon="monitor" drop></tool-button><tool-button icon="dots"></tool-button><tool-button icon="black"></tool-button><tool-button icon="bolt" drop></tool-button>
</div>`);

define('sketch-drawing', `
<style>
  :host { display: block; position: absolute; inset: 0; overflow: hidden; }
  svg { display: block; width: 100%; height: 100%; }
  .axis { stroke: #1818f5; stroke-width: 1.700; stroke-dasharray: 9 2 2 2; fill: none; }
  .geo { stroke: #000; stroke-width: 1.700; fill: none; }
  .dim { stroke: #8ca98a; fill: none; }
  text { font-size: 15px; }
  .small { font-size: 12px; }
  .val { fill: #85a181; }
  .mark { stroke: #0a3c66; stroke-width: 2; fill: none; }
  .pt { fill: #1212f0; }
</style>
<svg><g transform="translate(-313 -170)">
  <path class="axis" d="M603 170V598M313 433H1182"/>
  <rect x="604" y="392" width="40" height="40" fill="#c9a06a" fill-opacity=".45"/>
  <path d="M604 391.500h40.500V432" fill="none" stroke="#b88746" stroke-dasharray="11 4"/>
  <path class="dim" d="M605 289.500h66M737 289.500h67M805.500 285v10M609 288l-4 1.500 4 1.500M800 288l4 1.500-4 1.500M593.500 300v52M593.500 379v53M589 298.500h12M590 432.500h12M592 304l1.500-4 1.500 4M592 428l1.500 4 1.500-4"/>
  <path class="dim" d="M814 294l25 37M858 357l26 38M808 297l9-6M879 400l10-7M814 299v-5l4 2M884 390v5l-4-2M871 392l-84 34M722 452l-83 33M868 386l6 13M866 393l5-1-2 5M627 454l8-5M633 452v6M646 494l-7-9M645 484l-4 6h6"/>
  <path class="dim" d="M743 300c0 18 6 31 19 43M742 304l1-4 2 4M792 359c18 4 34 1 46-8M819 375c3-9 9-17 19-24M815 391c-1 12 0 22 3 33M815 421l3 3 1-4"/>
  <path class="geo" d="M603 378V299H805L876 401 639 496 622 454"/>
  <path d="M603 378v55" stroke="#10dd20" stroke-width="2"/>
  <path d="M604 433h55" stroke="#ee1420" stroke-width="2"/>
  <path d="M676 430l7 3-7 3z" fill="#0a1a60"/>
  <text x="689" y="438" fill="#a8681c">X</text><text class="small" x="600" y="345" fill="#9a5a14">Y</text>
  <path d="M603 352l-2 5h4z" fill="#5a2c14"/>
  <rect x="599" y="429" width="8" height="8" fill="none" stroke="#a8681c"/>
  <rect x="600" y="430" width="6" height="6" fill="#6e76ef" stroke="#1212f0" stroke-width="2"/>
  <rect x="619" y="451" width="6" height="6" fill="#d8d8d8" stroke="#1212f0" stroke-width="2"/>
  <circle class="pt" cx="603" cy="299" r="2"/><circle class="pt" cx="805" cy="299" r="2"/><circle class="pt" cx="876" cy="401" r="2"/><circle class="pt" cx="639" cy="496" r="2"/>
  <path class="mark" d="M598 287l9-10M603 282l4 5M699 282h10M633 482h11M638.500 474v8"/>
  <path d="M600 279l4 4" stroke="#d01830" stroke-width="1.500"/>
  <g class="val"><text x="681" y="295">125.15</text><text x="574" y="371">82.96</text><text x="751" y="360">124.94°</text><text x="834" y="350">77.2</text>
  <text x="795" y="388">76.83°</text><text x="731" y="445">158.58</text><text x="629" y="477">7.95</text></g>
  <path d="M367 532V495" stroke="#22c422" stroke-width="2"/><path d="M367 532h37" stroke="#f01414" stroke-width="2"/>
  <path d="M365 500l2-5 2 5zM399 530l5 2-5 2z" fill="#333"/>
  <text x="362" y="495" fill="#22c422">Y</text><text x="405" y="538" fill="#f01414">X</text><text x="361" y="538" fill="#1414e0">Z</text>
</g></svg>`);

define('sketch-view', `
<style>
  :host { display: grid; grid-template-rows: 20px 1fr; min-width: 0; }
  .tabs { display: flex; align-items: center; padding-right: 4px; border-bottom: 1px solid #c3c7cd; box-sizing: border-box; --size: 9px; }
  .tab { display: flex; align-items: center; align-self: stretch; gap: 7px; box-sizing: border-box; width: 177px; height: 20px; padding: 0 0 0 27px; background: #fcfcfc; border: 1px solid #c3c7cd; border-bottom: 0; color: #111; font: inherit; font-size: var(--small); white-space: nowrap; }
  .add { margin-left: 5px; }
  .more { margin-left: auto; }
  .view { position: relative; display: flex; flex-direction: column; background: linear-gradient(#fff, #9e9e9e); border-right: 1px solid #d5d9de; box-sizing: border-box; overflow: hidden; }
  view-toolbar, ul, output { position: relative; }
  ul { list-style: none; margin: 26px 0 0 8px; padding: 0; font-size: var(--large); color: #111; }
  li { display: flex; align-items: center; box-sizing: border-box; height: 72px; padding: 0 0 12px 4px; line-height: 20px; border-left: 8px solid var(--c); }
  output { margin: auto 0 0 3px; line-height: 18px; font-size: var(--large); color: #111; }
</style>
<div class="tabs"><button class="tab" type="button">* 山涧果子.Z3PRT - [草图1]<ui-icon name="x"></ui-icon></button><ui-icon class="add" name="plus"></ui-icon><ui-icon class="more" name="more"></ui-icon></div>
<div class="view">
  <sketch-drawing></sketch-drawing>
  <view-toolbar></view-toolbar>
  <ul><li style="--c:#f00">过约束</li><li style="--c:#000">缺少约束</li><li style="--c:#ff0">未求解</li><li style="--c:#00f">明确约束</li></ul>
  <output>264.909mm</output>
</div>`);

/* ---------- status bar and overlays ---------- */
define('status-bar', `
<style>
  :host { display: flex; align-items: center; box-sizing: border-box; height: 27px; padding: 0 2px 0 5px; border-top: 1px solid #c3c7cd; font-size: var(--small); }
  span { flex: 1; }
  i { width: 1px; height: 20px; margin-right: 12px; background: #888; }
  tool-button { --w: 20px; margin-right: 5px; }
  input { box-sizing: border-box; width: 302px; height: 20px; margin-left: 1px; border: 1px solid #c3c7cd; background: #fff; }
</style>
<span>选择命令或实体</span><i></i>
<tool-button icon="tpanel" active></tool-button><tool-button icon="screen"></tool-button><tool-button icon="list"></tool-button>
<input type="text" aria-label="输出">`);

define('step-pin', `
<style>
  :host { position: absolute; display: grid; place-items: center; box-sizing: border-box; width: 35px; height: 35px; padding-bottom: 2px; border: 1px solid #fff;
          border-radius: 50%; background: #fa3f3f; color: #fff; font-size: var(--large); box-shadow: 0 0 2px #9996; }
</style><slot></slot>`);

define('speed-widget', `
<style>
  :host { position: absolute; right: 3px; bottom: 23px; width: 36px; height: 129px; border-radius: 7px 7px 12px 12px; background: #2f323c; color: #fff;
          display: flex; flex-direction: column; align-items: center; }
  ui-icon { --size: 16px; margin: 7px 0 8px; }
  .ring { position: relative; display: grid; place-items: center; width: 36px; height: 36px; margin-bottom: 6px; }
  svg { position: absolute; inset: 0; }
  strong { position: relative; font-size: 14px; line-height: 16px; display: flex; align-items: baseline; }
  small { font-size: 8px; font-weight: normal; color: #ccc; }
  p { display: grid; grid-template-columns: 8px auto; align-items: center; margin: 0 0 6px; font-size: 10px; line-height: 11px; font-weight: bold; }
  p small { grid-column: 2; line-height: 8px; }
  i { width: 5px; height: 6px; clip-path: polygon(50% 0, 100% 50%, 65% 50%, 65% 100%, 35% 100%, 35% 50%, 0 50%); background: #1e9cf0; }
  .down { transform: rotate(180deg); background: #14b35c; }
</style>
<ui-icon name="shield"></ui-icon>
<div class="ring"><svg viewBox="0 0 36 36" fill="none" stroke-width="2"><defs><linearGradient id="g" x2="0" y2="1"><stop stop-color="#f09a2a"/><stop offset=".5" stop-color="#a8c84a"/><stop offset="1" stop-color="#2cc0b0"/></linearGradient></defs><circle cx="18" cy="18" r="17" stroke="#484b55"/><path stroke="url(#g)" d="M3.500 9a17 17 0 1 0 29 0"/></svg><strong>78<small>%</small></strong></div>
<p><i></i>0.1<small>K/s</small></p><p><i class="down"></i>0.0<small>K/s</small></p>`);

define('cad-app', `
<style>
  :host { position: relative; display: grid; grid-template-rows: auto auto auto auto 1fr auto; min-height: 100vh; overflow: hidden; }
  .work { display: grid; grid-template-columns: 313px 1fr; min-height: 0; }
  .tip { position: absolute; left: 785px; top: 198px; box-sizing: border-box; height: 17px; padding: 0 4px; border: 1px solid #555; background: #fdfdfd; color: #111;
         line-height: 15px; font-size: var(--small); white-space: nowrap; box-shadow: 2px 2px 2px #0007; }
  .mark { position: absolute; right: 5px; bottom: 6px; font-size: 23px; line-height: 30px; color: #dedede; text-shadow: 1px 1px 1px #777; white-space: nowrap; }
  .mark2 { position: absolute; right: 8px; bottom: 6px; font-size: 14px; line-height: 20px; color: #999c; white-space: nowrap; }
</style>
<title-bar></title-bar>
<ribbon-tabs></ribbon-tabs>
<ribbon-bar></ribbon-bar>
<filter-strip></filter-strip>
<div class="work"><manager-panel></manager-panel><sketch-view></sketch-view></div>
<status-bar></status-bar>
<div class="tip" role="tooltip">打开/关闭显示开放端点</div>
<step-pin style="left:768px;top:136px">1</step-pin>
<step-pin style="left:554px;top:401px">2</step-pin>
<step-pin style="left:596px;top:465px">3</step-pin>
<speed-widget></speed-widget>
<div class="mark">CSDN @山涧果子</div>
<div class="mark2">@51CTO博客</div>`);
</script>
</body>
</html>
